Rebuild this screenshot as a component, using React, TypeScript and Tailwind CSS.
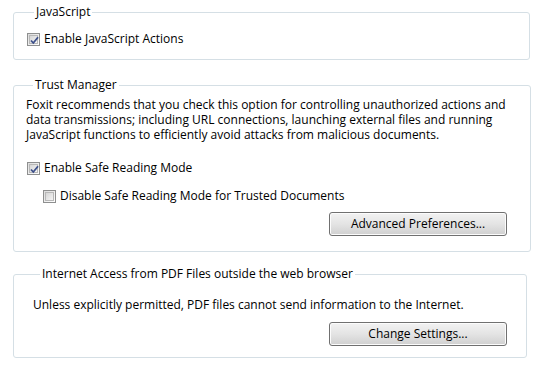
import React from "react";

function Check({ checked }: { checked?: boolean }) {
  return (
    <span className="relative inline-flex h-[13px] w-[13px] flex-none items-center justify-center border border-[#8e8f8f] bg-linear-to-br from-[#dcdcdc] to-[#ffffff]">
      <span className="h-[9px] w-[9px] border border-[#b8b8b8] bg-linear-to-br from-[#d6d6d6] to-[#f4f4f4]" />
      {checked && (
        <svg className="absolute left-[1px] top-[1px]" width="11" height="11" viewBox="0 0 11 11">
          <path d="M2 5.5 L4.3 8 L9 2.3" fill="none" stroke="#3c4f8a" strokeWidth="1.8" />
        </svg>
      )}
    </span>
  );
}

function Group({ title, className, children }: { title: string; className: string; children: React.ReactNode }) {
  return (
    <fieldset className={`rounded-[3px] border border-[#d5dfe5] ${className}`}>
      <legend className="ml-[7px] px-[2px] leading-[14px] text-black">{title}</legend>
      {children}
    </fieldset>
  );
}

function Btn({ label }: { label: string }) {
  return (
    <button className="h-[24px] w-[178px] rounded-[3px] border border-[#707070] bg-linear-to-b from-[#f2f2f2] via-[#e4e4e4] to-[#d0d0d0] text-black shadow-[inset_0_0_0_1px_#fcfcfc]">
      {label}
    </button>
  );
}

export default function App() {
  return (
    <div className="h-[367px] w-[542px] bg-white pl-[13px] pt-[5px] text-[12px] text-black [font-family:'Open_Sans',Arial,sans-serif]">
      <Group title="JavaScript" className="w-[517px] pl-[13px] pt-[13px] pb-[13px]">
        <label className="flex items-center gap-[4px] leading-[14px]">
          <Check checked />
          <span>Enable JavaScript Actions</span>
        </label>
      </Group>

      <Group title="Trust Manager" className="mt-[18px] w-[518px] pl-[12px] pr-[10px] pt-[5px] pb-[15px]">
        <div className="flex flex-col">
          <span className="block h-[15px] leading-[15px]">Foxit recommends that you check this option for controlling unauthorized actions and</span>
          <span className="block h-[15px] leading-[15px]">data transmissions; including URL connections, launching external files and running</span>
          <span className="block h-[15px] leading-[15px]">JavaScript functions to efficiently avoid attacks from malicious documents.</span>
        </div>
        <label className="mt-[19px] ml-[1px] flex items-center gap-[4px] leading-[14px]">
          <Check checked />
          <span>Enable Safe Reading Mode</span>
        </label>
        <label className="mt-[14px] ml-[17px] flex items-center gap-[4px] leading-[14px]">
          <Check />
          <span>Disable Safe Reading Mode for Trusted Documents</span>
        </label>
        <div className="mt-[9px] flex justify-end pr-[13px]">
          <Btn label="Advanced Preferences..." />
        </div>
      </Group>

      <Group title="Internet Access from PDF Files outside the web browser" className="mt-[15px] w-[514px] pl-[19px] pr-[19px] pt-[16px] pb-[11px]">
        <p className="leading-[15px]">Unless explicitly permitted, PDF files cannot send information to the Internet.</p>
        <div className="mt-[10px] flex justify-end">
          <Btn label="Change Settings..." />
        </div>
      </Group>
    </div>
  );
}
